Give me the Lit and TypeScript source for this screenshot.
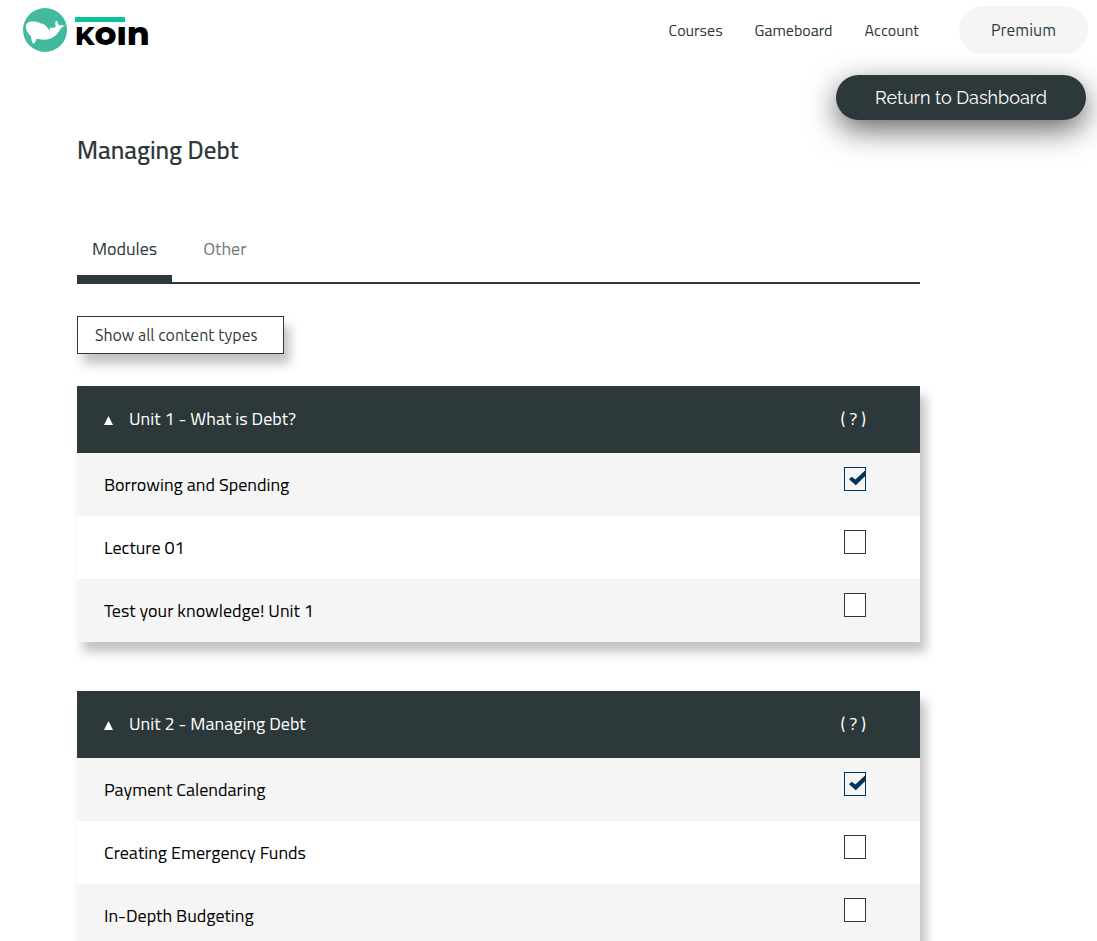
import { LitElement, html, css, svg } from "lit";
import { customElement, property, state } from "lit/decorators.js";

interface Lesson {
  title: string;
  done: boolean;
}

interface Unit {
  title: string;
  lessons: Lesson[];
}

const UNITS: Unit[] = [
  {
    title: "Unit 1 - What is Debt?",
    lessons: [
      { title: "Borrowing and Spending", done: true },
      { title: "Lecture 01", done: false },
      { title: "Test your knowledge! Unit 1", done: false },
    ],
  },
  {
    title: "Unit 2 - Managing Debt",
    lessons: [
      { title: "Payment Calendaring", done: true },
      { title: "Creating Emergency Funds", done: false },
      { title: "In-Depth Budgeting", done: false },
    ],
  },
];

const whale = svg`
  <circle cx="22" cy="22" r="22" fill="#43b99e" />
  <path fill="#fff" d="M2.8 18.4 C3 15 5.8 13.2 10 13.4 C13 13.4 15.6 14 18 15.4 C20 15.6 21.6 16.4 23 18 C24.6 20 25.4 21.2 27.2 22.4 C27.6 21.8 27 20.6 26.4 19.6 C29 20.4 31.4 20.2 32.8 18.6 C32.2 16.6 31.8 14.4 33.2 12.6 C34.8 13.8 34.8 15.8 36 17.4 C38 17 40 17 42 17.8 C39.8 18.6 38.2 19.6 37.2 21.4 C35 25.6 31 29.4 26 31 C22.6 32.2 19 31.6 15.6 31 C14.4 31 13.6 31.2 13 31.4 C12.8 33.2 12 35 10.4 35.8 C8.8 33.8 8 31.2 8.2 28.4 C5 25.6 2.6 22 2.8 18.4 Z" />
`;

@customElement("course-unit")
export class CourseUnit extends LitElement {
  @property({ attribute: false }) unit!: Unit;
  @state() private open = true;

  static styles = css`
    :host {
      display: block;
      background: #fff;
      box-shadow: 6px 10px 10px rgba(0, 0, 0, 0.24);
    }
    .head {
      display: flex;
      align-items: center;
      justify-content: space-between;
      height: 67px;
      box-sizing: border-box;
      padding: 0 54px 2px 27px;
      background: #2d383a;
      color: #fff;
    }
    .toggle,
    .help {
      border: 0;
      padding: 0;
      background: none;
      color: inherit;
      font: inherit;
      line-height: 24px;
      cursor: pointer;
    }
    .toggle {
      display: flex;
      align-items: center;
      gap: 16px;
    }
    .arrow {
      width: 9px;
      height: 9px;
      margin-top: 3px;
      fill: #fff;
    }
    .list {
      margin: 0;
      padding: 0;
      list-style: none;
    }
    .row {
      display: flex;
      justify-content: space-between;
      height: 63px;
      box-sizing: border-box;
      padding: 14px 54px 0 27px;
      color: #000;
    }
    .row:nth-child(odd) {
      background: #f5f5f5;
    }
    .title {
      line-height: 24px;
      padding-top: 6px;
    }
    .box {
      appearance: none;
      width: 22px;
      height: 24px;
      margin: 0;
      border: 1px solid #2d383a;
      background: #fff;
    }
    .box:checked {
      border-color: #003459;
      background: #f5f5f5
        url("data:image/svg+xml,%3Csvg xmlns='http://www.w3.org/2000/svg' viewBox='0 0 20 22'%3E%3Cpath fill='%23003459' d='M4 11.2 6.6 8.7 10.4 11.4 20 2.4V8.2L10.8 17.2Z'/%3E%3C/svg%3E")
        center / 20px 22px no-repeat;
    }
  `;

  render() {
    return html`
      <div class="head">
        <button class="toggle" aria-expanded=${this.open} @click=${() => (this.open = !this.open)}>
          <svg class="arrow" viewBox="0 0 9 9" aria-hidden="true"><path d="M4.5 0 9 9H0Z" /></svg>
          <span>${this.unit.title}</span>
        </button>
        <button class="help">( ? )</button>
      </div>
      ${this.open
        ? html`<ul class="list">
            ${this.unit.lessons.map(
              (lesson, i) => html`<li class="row">
                <label class="title" for="lesson-${i}">${lesson.title}</label>
                <input class="box" id="lesson-${i}" type="checkbox" .checked=${lesson.done} />
              </li>`
            )}
          </ul>`
        : null}
    `;
  }
}

@customElement("app-root")
export class AppRoot extends LitElement {
  static styles = css`
    :host {
      display: block;
      height: 100vh;
      overflow: hidden auto;
      scrollbar-width: none;
      background: #fff;
      color: #2d383a;
      font: 18px/24px "Titillium Web", Roboto, sans-serif;
    }
    .top {
      display: flex;
      align-items: center;
      justify-content: space-between;
      height: 60px;
      padding: 0 9px 0 23px;
    }
    .logo {
      display: flex;
      align-items: center;
      gap: 8px;
      color: #000;
      text-decoration: none;
    }
    .whale {
      width: 44px;
      height: 44px;
    }
    .word {
      display: flex;
      flex-direction: column;
      padding-top: 4px;
    }
    .bar {
      width: 50px;
      height: 5px;
      background: #0cc29c;
    }
    .name {
      font: 800 33px/22px Montserrat, Inter, sans-serif;
    }
    .cap {
      font-size: 26px;
    }
    .nav {
      display: flex;
      align-items: center;
      gap: 32px;
      font-size: 16px;
    }
    .nav a {
      color: inherit;
      text-decoration: none;
    }
    .nav .premium {
      margin-left: 8px;
      padding: 12px 32px;
      border-radius: 24px;
      background: #f5f5f5;
      font-family: Ubuntu, "Titillium Web", Roboto, sans-serif;
      font-weight: 450;
    }
    .actions {
      display: flex;
      justify-content: flex-end;
      padding: 15px 11px 0 0;
    }
    .return {
      width: 250px;
      height: 45px;
      border: 0;
      border-radius: 23px;
      background: #2d383a;
      box-shadow: 0 10px 30px rgba(0, 0, 0, 0.6);
      color: #fff;
      font: 18px/24px Raleway, Lato, sans-serif;
    }
    .main {
      padding: 14px 177px 48px 77px;
    }
    .heading {
      margin: 0;
      font-family: Cairo, "Titillium Web", Roboto, sans-serif;
      font-size: 25px;
      font-weight: 600;
      line-height: 32px;
    }
    .tabs {
      display: flex;
      margin-top: 59px;
      border-bottom: 2px solid #2d383a;
    }
    .tab {
      border: 0;
      border-bottom: 8px solid transparent;
      padding: 12px 15px 14px;
      margin: 0 16px -1px 0;
      background: none;
      color: #777;
      font: inherit;
    }
    .tab.active {
      border-color: #2d383a;
      color: inherit;
    }
    .filter {
      display: block;
      width: 207px;
      height: 38px;
      margin: 32px 0;
      border: 1px solid #2d383a;
      padding: 0 17px;
      background: #fff;
      box-shadow: 6px 10px 10px rgba(0, 0, 0, 0.24);
      color: inherit;
      font: 450 16px/24px Ubuntu, "Titillium Web", Roboto, sans-serif;
      text-align: left;
    }
    .units {
      display: grid;
      gap: 49px;
    }
  `;

  render() {
    return html`
      <header class="top">
        <a class="logo" href="#" aria-label="koin">
          <svg class="whale" viewBox="0 0 44 44" aria-hidden="true">${whale}</svg>
          <span class="word">
            <span class="bar"></span>
            <span class="name"><span class="cap">K</span>oın</span>
          </span>
        </a>
        <nav class="nav">
          <a href="#">Courses</a>
          <a href="#">Gameboard</a>
          <a href="#">Account</a>
          <a class="premium" href="#">Premium</a>
        </nav>
      </header>
      <div class="actions"><button class="return">Return to Dashboard</button></div>
      <main class="main">
        <h1 class="heading">Managing Debt</h1>
        <div class="tabs" role="tablist">
          <button class="tab active" role="tab" aria-selected="true">Modules</button>
          <button class="tab" role="tab" aria-selected="false">Other</button>
        </div>
        <button class="filter">Show all content types</button>
        <div class="units">
          ${UNITS.map((unit) => html`<course-unit .unit=${unit}></course-unit>`)}
        </div>
      </main>
    `;
  }
}
